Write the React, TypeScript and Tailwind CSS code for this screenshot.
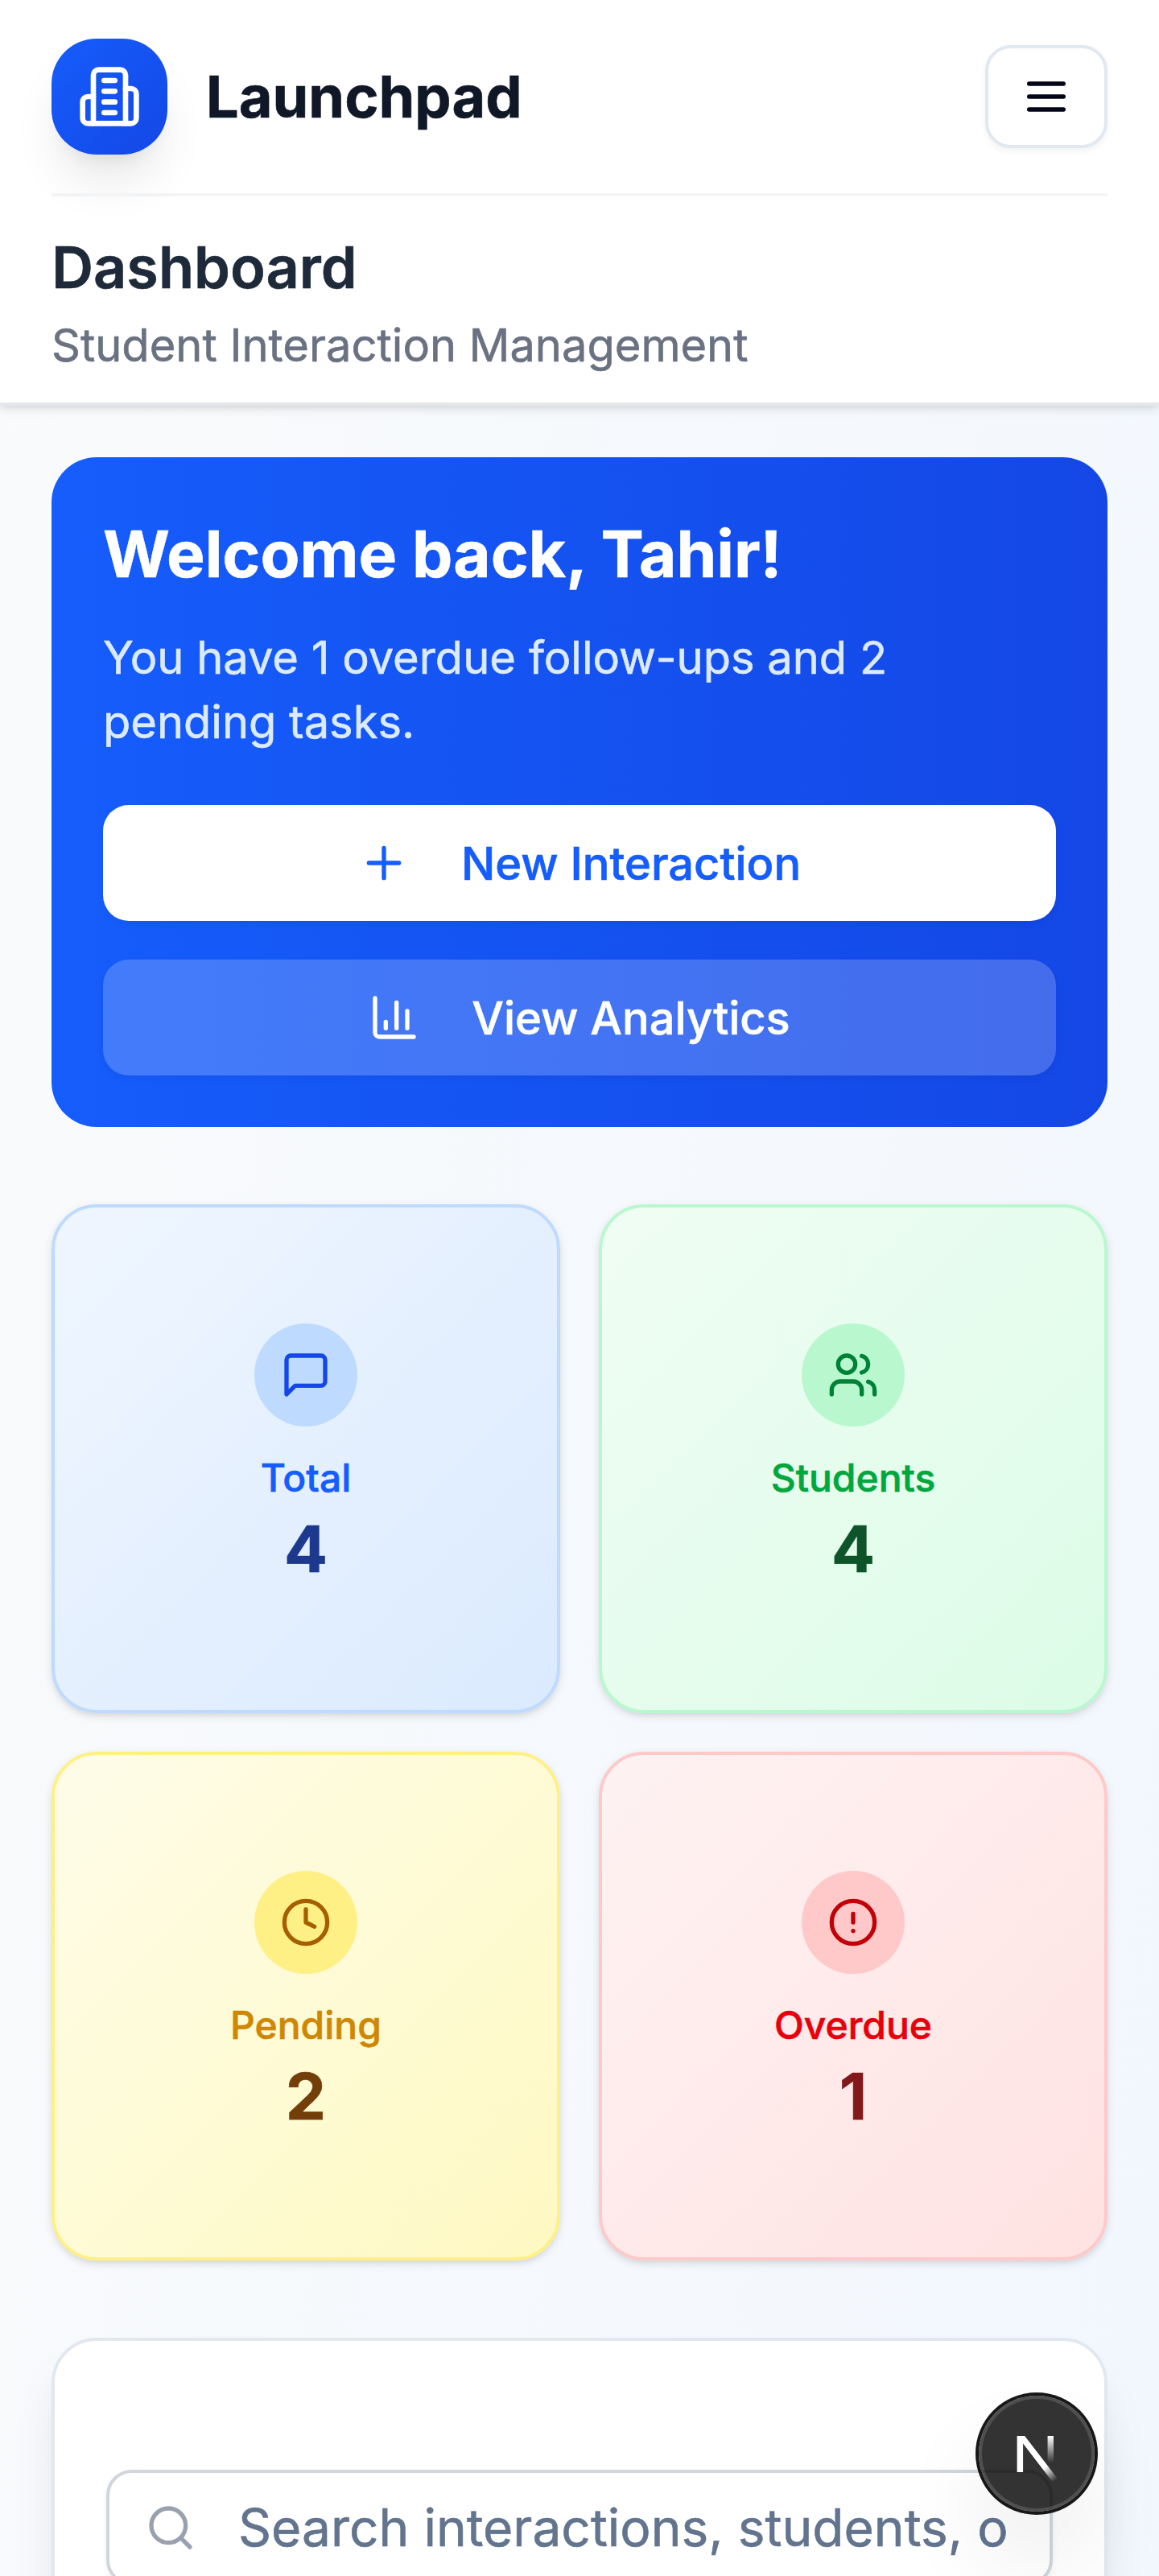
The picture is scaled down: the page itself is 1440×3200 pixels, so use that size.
import type { ReactNode } from 'react';

type IconProps = { className?: string; children: ReactNode };

function Icon({ className = 'size-16', children }: IconProps) {
  return (
    <svg
      viewBox="0 0 24 24"
      fill="none"
      stroke="currentColor"
      strokeWidth="2"
      strokeLinecap="round"
      strokeLinejoin="round"
      className={`shrink-0 ${className}`}
    >
      {children}
    </svg>
  );
}

function BuildingIcon() {
  return (
    <Icon className="size-20">
      <path d="M6 22V4a2 2 0 0 1 2-2h8a2 2 0 0 1 2 2v18Z" />
      <path d="M6 12H4a2 2 0 0 0-2 2v6a2 2 0 0 0 2 2h2" />
      <path d="M18 9h2a2 2 0 0 1 2 2v9a2 2 0 0 1-2 2h-2" />
      <path d="M10 6h4" />
      <path d="M10 10h4" />
      <path d="M10 14h4" />
      <path d="M10 18h4" />
    </Icon>
  );
}

function MenuIcon() {
  return (
    <Icon>
      <path d="M4 6h16" />
      <path d="M4 12h16" />
      <path d="M4 18h16" />
    </Icon>
  );
}

function PlusIcon() {
  return (
    <Icon>
      <path d="M5 12h14" />
      <path d="M12 5v14" />
    </Icon>
  );
}

function ChartIcon() {
  return (
    <Icon>
      <path d="M3 3v16a2 2 0 0 0 2 2h16" />
      <path d="M18 17V9" />
      <path d="M13 17V5" />
      <path d="M8 17v-3" />
    </Icon>
  );
}

function MessageIcon() {
  return (
    <Icon>
      <path d="M21 15a2 2 0 0 1-2 2H7l-4 4V5a2 2 0 0 1 2-2h14a2 2 0 0 1 2 2z" />
    </Icon>
  );
}

function UsersIcon() {
  return (
    <Icon>
      <path d="M16 21v-2a4 4 0 0 0-4-4H6a4 4 0 0 0-4 4v2" />
      <circle cx="9" cy="7" r="4" />
      <path d="M22 21v-2a4 4 0 0 0-3-3.87" />
      <path d="M16 3.13a4 4 0 0 1 0 7.75" />
    </Icon>
  );
}

function ClockIcon() {
  return (
    <Icon>
      <circle cx="12" cy="12" r="10" />
      <path d="M12 6v6l4 2" />
    </Icon>
  );
}

function AlertIcon() {
  return (
    <Icon>
      <circle cx="12" cy="12" r="10" />
      <path d="M12 8v4" />
      <path d="M12 16h.01" />
    </Icon>
  );
}

function SearchIcon() {
  return (
    <Icon className="size-16 text-gray-400">
      <circle cx="11" cy="11" r="8" />
      <path d="m21 21-4.3-4.3" />
    </Icon>
  );
}

function Header() {
  return (
    <header className="relative border-b-4 border-gray-200 bg-white px-16 shadow-[0_4px_12px_0_rgb(0_0_0/0.1),0_4px_8px_-4px_rgb(0_0_0/0.1)]">
      <div className="flex h-60 items-center justify-between">
        <div className="flex items-center gap-12">
          <div className="flex size-36 items-center justify-center rounded-[56px] bg-linear-to-br from-blue-600 to-blue-700 text-white shadow-[0_40px_60px_-12px_rgb(0_0_0/0.1),0_16px_24px_-16px_rgb(0_0_0/0.1)]">
            <BuildingIcon />
          </div>
          <span className="text-[72px]/[112px] font-bold text-gray-900">Launchpad</span>
        </div>
        <button className="flex h-32 w-38 items-center justify-center rounded-[32px] border-4 border-slate-200 bg-white text-slate-950 shadow-[0_4px_8px_0_rgb(0_0_0/0.05)]">
          <MenuIcon />
        </button>
      </div>
      <div className="relative border-t-4 border-gray-100 py-8">
        <h1 className="text-[72px]/[112px] font-semibold text-gray-800">Dashboard</h1>
        <p className="translate-y-px text-[56px]/[80px] text-gray-500">Student Interaction Management</p>
      </div>
    </header>
  );
}

function Welcome() {
  return (
    <section className="rounded-[56px] bg-linear-to-r from-blue-600 to-blue-700 p-16 text-white">
      <h2 className="mb-8 text-[80px]/[112px] font-bold">Welcome back, Tahir!</h2>
      <p className="translate-y-px text-[56px]/[80px] text-blue-100">
        You have 1 overdue follow-ups and 2<br />
        pending tasks.
      </p>
      <div className="mt-16 flex flex-col gap-12 text-[56px]/[80px] font-medium">
        <button className="flex h-36 items-center justify-center gap-16 rounded-[32px] bg-white text-blue-600 shadow-[0_4px_8px_0_rgb(0_0_0/0.05)]">
          <PlusIcon />
          <span className="translate-y-px">New Interaction</span>
        </button>
        <button className="flex h-36 items-center justify-center gap-16 rounded-[32px] bg-white/20 text-white shadow-[0_4px_8px_0_rgb(0_0_0/0.05)]">
          <ChartIcon />
          <span className="translate-y-px">View Analytics</span>
        </button>
      </div>
    </section>
  );
}

const stats = [
  {
    label: 'Total',
    value: 4,
    icon: <MessageIcon />,
    card: 'border-blue-200 from-blue-50 to-blue-100',
    badge: 'bg-blue-200 text-blue-700',
    labelColor: 'text-blue-600',
    valueColor: 'text-blue-900',
  },
  {
    label: 'Students',
    value: 4,
    icon: <UsersIcon />,
    card: 'border-green-200 from-green-50 to-green-100',
    badge: 'bg-green-200 text-green-700',
    labelColor: 'text-green-600',
    valueColor: 'text-green-900',
  },
  {
    label: 'Pending',
    value: 2,
    icon: <ClockIcon />,
    card: 'border-yellow-200 from-yellow-50 to-yellow-100',
    badge: 'bg-yellow-200 text-yellow-700',
    labelColor: 'text-yellow-600',
    valueColor: 'text-yellow-900',
  },
  {
    label: 'Overdue',
    value: 1,
    icon: <AlertIcon />,
    card: 'border-red-200 from-red-50 to-red-100',
    badge: 'bg-red-200 text-red-700',
    labelColor: 'text-red-600',
    valueColor: 'text-red-900',
  },
];

function Stats() {
  return (
    <section className="grid grid-cols-2 gap-12">
      {stats.map((s) => (
        <div
          key={s.label}
          className={`flex aspect-square flex-col items-center justify-center rounded-[56px] border-4 bg-linear-to-br shadow-[0_4px_12px_0_rgb(0_0_0/0.1),0_4px_8px_-4px_rgb(0_0_0/0.1)] ${s.card}`}
        >
          <div className={`mb-8 flex size-32 items-center justify-center rounded-full ${s.badge}`}>{s.icon}</div>
          <p className={`text-[48px]/[64px] font-medium ${s.labelColor}`}>{s.label}</p>
          <p className={`text-[80px]/[112px] font-bold ${s.valueColor}`}>{s.value}</p>
        </div>
      ))}
    </section>
  );
}

function SearchPanel() {
  return (
    <section className="h-[1200px] rounded-[56px] border-4 border-slate-200 bg-white px-16 pt-40 shadow-[0_40px_60px_-12px_rgb(0_0_0/0.1),0_16px_24px_-16px_rgb(0_0_0/0.1)]">
      <div className="flex h-36 items-center gap-[52px] rounded-[32px] border-4 border-gray-300 bg-white px-[44px] shadow-[0_4px_8px_0_rgb(0_0_0/0.05)]">
        <SearchIcon />
        <span className="overflow-hidden text-[64px]/[96px] whitespace-nowrap text-slate-500">
          Search interactions, students, o
        </span>
      </div>
    </section>
  );
}

function DevBadge() {
  return (
    <div className="absolute top-[2976px] left-[1216px] size-36 rounded-full bg-black/80 shadow-[0_0_0_4px_#171717,inset_0_0_0_4px_rgb(255_255_255/0.14),0_64px_128px_-32px_rgb(0_0_0/0.24)]">
      <svg viewBox="0 0 36 36" fill="none" className="size-36">
        <defs>
          <linearGradient id="diagonalFade" gradientUnits="userSpaceOnUse" x1="9.95555" y1="11.1226" x2="15.4778" y2="17.9671">
            <stop stopColor="white" />
            <stop offset="0.604072" stopColor="white" stopOpacity="0" />
            <stop offset="1" stopColor="white" stopOpacity="0" />
          </linearGradient>
          <linearGradient id="stemFade" gradientUnits="userSpaceOnUse" x1="11.8222" y1="1.4" x2="11.797" y2="9.62417">
            <stop stopColor="white" />
            <stop offset="1" stopColor="white" stopOpacity="0" />
          </linearGradient>
          <clipPath id="topEdge">
            <rect x="0" y="1.35" width="16" height="16" />
          </clipPath>
        </defs>
        <g transform="translate(10.5 11.15)" clipPath="url(#topEdge)">
          <path d="M13.3 15.2 L2.34 1 V12.6" stroke="url(#diagonalFade)" strokeWidth="1.86" />
          <path d="M11.825 1.35 V13.1" stroke="url(#stemFade)" strokeWidth="1.86" />
        </g>
      </svg>
    </div>
  );
}

export default function App() {
  return (
    <div className="relative h-[3200px] w-[1440px] overflow-hidden font-['Inter',sans-serif] antialiased [-webkit-text-stroke:0.6px_currentColor]">
      <div className="min-h-[11000px] bg-linear-to-br from-gray-50 to-blue-50">
        <Header />
        <main className="flex flex-col gap-24 p-16">
          <Welcome />
          <Stats />
          <SearchPanel />
        </main>
      </div>
      <DevBadge />
    </div>
  );
}
